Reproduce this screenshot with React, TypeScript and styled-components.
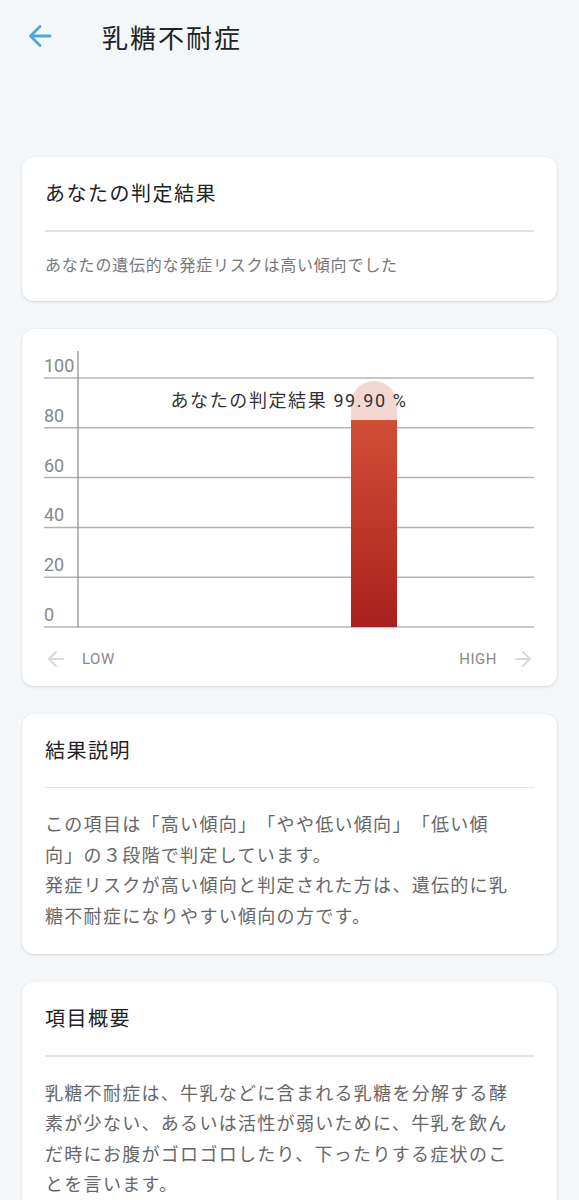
import React from "react";
import styled, { createGlobalStyle } from "styled-components";
import { ArrowLeft, ArrowRight } from "lucide-react";

const GlobalStyle = createGlobalStyle`
  * { box-sizing: border-box; }
  body {
    margin: 0;
    background: #f3f7fa;
    font-family: Roboto, "Noto Sans CJK JP", sans-serif;
    color: #222;
    text-spacing-trim: space-all;
  }
`;

const Page = styled.div`
  width: 579px;
  min-height: 1200px;
  background: #f3f7fa;
`;

const Header = styled.header`
  height: 72px;
  display: flex;
  align-items: center;
  padding: 0 0 0 28px;
  gap: 50px;
`;

const BackButton = styled.button`
  display: flex;
  border: none;
  background: none;
  padding: 0;
  cursor: pointer;
`;

const Title = styled.h1`
  margin: 0;
  font-size: 26px;
  font-weight: 400;
  letter-spacing: 2px;
  color: #222;
`;

const Main = styled.main`
  display: flex;
  flex-direction: column;
  gap: 28px;
  padding: 85px 22px 40px;
`;

const Card = styled.section<{ $pad?: string }>`
  background: #fff;
  border-radius: 12px;
  box-shadow: 0 1px 3px rgba(0, 0, 0, 0.13), 0 0 1px rgba(0, 0, 0, 0.06);
  padding: ${(p) => p.$pad ?? "23px 23px 23px"};
`;

const CardTitle = styled.h2`
  margin: 0;
  font-size: 20px;
  line-height: 28px;
  font-weight: 400;
  letter-spacing: 1.5px;
  color: #222;
`;

const Divider = styled.hr`
  border: none;
  height: 1.5px;
  background: #e2e4e6;
  margin: 22px 0;
`;

const Lead = styled.p`
  margin: 0;
  font-size: 16px;
  line-height: 24px;
  letter-spacing: 0.8px;
  color: #777;
`;

const Body = styled.p`
  margin: 0;
  padding-right: 19px;
  font-size: 18px;
  line-height: 30.5px;
  letter-spacing: 1.3px;
  color: #666;
  line-break: strict;
  text-spacing-trim: space-all;
`;

const Plot = styled.svg`
  display: block;
  overflow: visible;
`;

const AxisRow = styled.div`
  display: flex;
  justify-content: space-between;
  align-items: center;
  margin-top: 16px;
`;

const AxisEnd = styled.div`
  display: flex;
  align-items: center;
  gap: 14px;
  font-size: 15px;
  letter-spacing: 0.5px;
  color: #888;
`;

const ticks = [100, 80, 60, 40, 20, 0];
const score = 99.9;

const ResultChart = () => {
  const top = 29;
  const step = 49.8;
  const base = top + step * 5;
  const barX = 307;
  const barW = 46;
  return (
    <Plot width={491} height={282} viewBox="0 0 491 282">
      <defs>
        <linearGradient id="bar" x1="0" y1="0" x2="0" y2="1">
          <stop offset="0" stopColor="#d14f35" />
          <stop offset="1" stopColor="#a9201e" />
        </linearGradient>
      </defs>
      {ticks.map((t, i) => {
        const y = top + step * i;
        return (
          <g key={t}>
            <line x1={0} x2={490} y1={y} y2={y} stroke="#b4b4b4" strokeWidth={1.5} />
            <text x={0} y={y - 6} fontSize={18} fill="#888" fontFamily="Roboto, sans-serif">
              {t}
            </text>
          </g>
        );
      })}
      <line x1={34} x2={34} y1={2} y2={base} stroke="#8a8a8a" strokeWidth={1.2} />
      <path
        d={`M${barX} ${base} V${top + 26} a${barW / 2} ${barW / 2} 0 0 1 ${barW} 0 V${base} Z`}
        fill="#f3d8d2"
      />
      <rect x={barX} y={71} width={barW} height={base - 71} fill="url(#bar)" />
      <text
        x={245}
        y={58}
        textAnchor="middle"
        fontSize={18}
        letterSpacing={1.6}
        fill="#333"
        fontFamily='Roboto, "Noto Sans CJK JP", sans-serif'
      >
        あなたの判定結果 {score.toFixed(2)} %
      </text>
    </Plot>
  );
};

const BackIcon = () => (
  <svg width="24" height="24" viewBox="0 0 24 24" fill="none">
    <path
      d="M22 12H2.5M12 2.5L2.5 12L12 21.5"
      stroke="#4aa8dc"
      strokeWidth={2.8}
      strokeLinecap="round"
      strokeLinejoin="round"
    />
  </svg>
);

export default function App() {
  return (
    <Page>
      <GlobalStyle />
      <Header>
        <BackButton aria-label="戻る">
          <BackIcon />
        </BackButton>
        <Title>乳糖不耐症</Title>
      </Header>
      <Main>
        <Card>
          <CardTitle>あなたの判定結果</CardTitle>
          <Divider />
          <Lead>あなたの遺伝的な発症リスクは高い傾向でした</Lead>
        </Card>

        <Card $pad="20px 22px 15px">
          <ResultChart />
          <AxisRow>
            <AxisEnd>
              <ArrowLeft size={24} color="#d9d9d9" strokeWidth={2} />
              LOW
            </AxisEnd>
            <AxisEnd>
              HIGH
              <ArrowRight size={24} color="#d9d9d9" strokeWidth={2} />
            </AxisEnd>
          </AxisRow>
        </Card>

        <Card $pad="23px 23px 22px">
          <CardTitle>結果説明</CardTitle>
          <Divider />
          <Body>
            この項目は「高い傾向」「やや低い傾向」「低い傾向」の３段階で判定しています。
            <br />
            発症リスクが高い傾向と判定された方は、遺伝的に乳糖不耐症になりやすい傾向の方です。
          </Body>
        </Card>

        <Card $pad="23px 23px 22px">
          <CardTitle>項目概要</CardTitle>
          <Divider />
          <Body>
            乳糖不耐症は、牛乳などに含まれる乳糖を分解する酵素が少ない、あるいは活性が弱いために、牛乳を飲んだ時にお腹がゴロゴロしたり、下ったりする症状のことを言います。
          </Body>
        </Card>
      </Main>
    </Page>
  );
}
